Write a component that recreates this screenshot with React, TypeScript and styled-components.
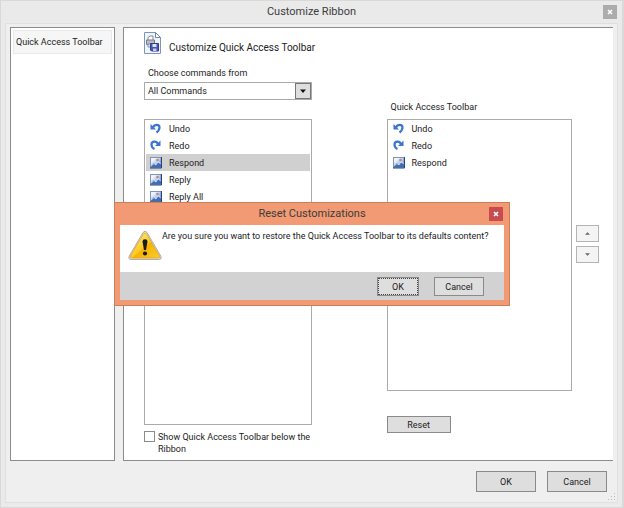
import React from 'react';
import styled, { createGlobalStyle, css } from 'styled-components';

const GlobalStyle = createGlobalStyle`
  *, *::before, *::after { box-sizing: border-box; }
  body {
    margin: 0;
    background: #fff;
    color: #222;
    font-family: Roboto, "Open Sans", sans-serif;
    font-size: 9px;
    line-height: 12px;
  }
  button, select, input { font: inherit; color: inherit; margin: 0; }
  h1, h2, p, ul { margin: 0; padding: 0; font-size: inherit; font-weight: 400; }
`;

const Window = styled.main`
  display: flex;
  flex-direction: column;
  min-height: 100vh;
  padding: 0 4px 4px 4px;
  background: #eaeaea;
  border: solid #d9d9d9;
  border-width: 1px 2px 2px 1px;
`;

const TitleBar = styled.header`
  display: grid;
  grid-template-columns: 1fr auto 1fr;
  align-items: center;
  height: 22px;
`;

const Title = styled.h1`
  grid-column: 2;
  font-size: 11px;
  line-height: 16px;
  color: #3c3c3c;
`;

const CloseButton = styled.button<{ $active?: boolean }>`
  justify-self: end;
  display: grid;
  place-items: center;
  width: 14px;
  height: 14px;
  margin-right: 1px;
  padding: 0;
  border: 0;
  color: #fff;
  background: ${p => (p.$active ? '#c84b50' : '#acacac')};
`;

const Content = styled.div`
  flex: 1;
  display: flex;
  flex-direction: column;
  padding: 3px 4px 0;
  background: #efefef;
  border: 1px solid #e0e0e0;
`;

const Panels = styled.div`
  flex: 1;
  display: flex;
  gap: 8px;
`;

const Sidebar = styled.nav`
  flex: 0 0 105px;
  padding: 2px;
  background: #fff;
  border: 1px solid #8c8c8c;
`;

const SideItem = styled.a`
  display: block;
  padding: 5px 2px;
  background: #f6f6f6;
  border: 1px solid #e9e9e9;
  color: inherit;
  text-decoration: none;
  white-space: nowrap;
`;

const Page = styled.section`
  flex: 1;
  padding: 4px 14px 5px 20px;
  background: #fff;
  border: solid #8c8c8c;
  border-width: 1px 0 1px 1px;
`;

const PageHeader = styled.div`
  display: flex;
  align-items: center;
  gap: 8px;
  height: 22px;
`;

const PageTitle = styled.h2`
  padding-top: 10px;
  font-size: 10px;
  line-height: 14px;
`;

const Columns = styled.div`
  display: flex;
`;

const Column = styled.div<{ $grow: number; $gap?: number; $top: number }>`
  flex: ${p => p.$grow} 1 0;
  min-width: 0;
  margin-right: ${p => p.$gap || 0}px;
  padding-top: ${p => p.$top}px;
`;

const Label = styled.label`
  display: block;
  padding-left: 4px;
`;

const ListTitle = styled.h2`
  margin-bottom: 6px;
  padding-left: 4px;
`;

const SelectBox = styled.div`
  display: grid;
  grid-template-columns: 1fr 16px;
  height: 18px;
  margin: 3px 0 19px;
  border: 1px solid #aaa;
  & > svg {
    grid-area: 1 / 2;
    width: 16px;
    height: 16px;
    background: #dedede;
    border: 1px solid #777;
    pointer-events: none;
  }
`;

const Select = styled.select`
  grid-area: 1 / 1 / 2 / 3;
  appearance: none;
  width: 100%;
  padding: 0 20px 0 3px;
  border: 0;
  background: #fff;
`;

const List = styled.ul<{ $height: number }>`
  height: ${p => p.$height}px;
  padding: 0 1px;
  border: 1px solid #ababab;
  list-style: none;
`;

const Row = styled.li<{ $selected?: boolean }>`
  display: flex;
  align-items: center;
  gap: 7px;
  height: 17px;
  padding-left: 3px;
  background: ${p => (p.$selected ? '#d0d0d0' : 'transparent')};
`;

const CheckLabel = styled.label`
  display: flex;
  gap: 3px;
  padding-top: 6px;
`;

const Checkbox = styled.input`
  appearance: none;
  flex: 0 0 11px;
  height: 11px;
  border: 1px solid #8c8c8c;
  background: #fff;
`;

const Button = styled.button<{ $width: number; $height: number; $focus?: boolean }>`
  width: ${p => p.$width}px;
  height: ${p => p.$height}px;
  padding: 0;
  background: #dedede;
  border: 1px solid #8a8a8a;
  ${p => p.$focus && css`
    outline: 1px dotted #444;
    outline-offset: -2px;
  `}
`;

const ResetRow = styled.div`
  padding-top: 25px;
`;

const Movers = styled.div`
  display: flex;
  flex-direction: column;
  gap: 4px;
  padding: 171px 0 0 4px;
`;

const MoveButton = styled.button`
  display: grid;
  place-items: center;
  width: 23px;
  height: 17px;
  padding: 0;
  border: 1px solid #b4b4b4;
  background: #f4f4f4;
`;

const Footer = styled.footer`
  position: relative;
  display: flex;
  justify-content: flex-end;
  gap: 11px;
  padding: 10px 6px;
`;

const Grip = styled.svg`
  position: absolute;
  right: -3px;
  bottom: 1px;
`;

const Overlay = styled.div`
  position: fixed;
  inset: 0;
  display: grid;
  place-items: center;
`;

const Dialog = styled.section`
  width: 396px;
  max-width: 100%;
  padding: 0 5px 5px;
  background: #f19a74;
  border: 1px solid #cf7c58;
`;

const DialogBody = styled.div`
  display: flex;
  min-height: 47px;
  padding: 5px 8px;
  background: #fff;
  & > svg { flex: none; }
`;

const DialogText = styled.p`
  flex: 1;
`;

const DialogFooter = styled.div`
  display: flex;
  justify-content: flex-end;
  gap: 15px;
  padding: 5px 20px 4px;
  background: #d2d2d2;
`;

const CloseIcon = () => (
  <svg width="6" height="6" viewBox="0 0 6 6" aria-hidden="true">
    <path d="M1 1l4 4M5 1L1 5" stroke="currentColor" strokeWidth="1.5" />
  </svg>
);

const UndoIcon = () => (
  <svg width="13" height="13" viewBox="0 0 13 13" aria-hidden="true">
    <path d="M1.500 2v5.500h5.500z" fill="#3c74d0" />
    <path d="M4 5.500C5.500 2 10.500 2 10.500 5.500c0 2-1 3.500-3 5" fill="none" stroke="#3c74d0" strokeWidth="2.200" />
  </svg>
);

const RedoIcon = () => (
  <svg width="13" height="13" viewBox="0 0 13 13" aria-hidden="true">
    <path d="M11.500 1.500v5.500H6z" fill="#3c74d0" />
    <path d="M9 5C7.500 1.500 2.500 2 2.500 5.500c0 2 1 3.500 3 4.500" fill="none" stroke="#3c74d0" strokeWidth="2.200" />
  </svg>
);

const PictureIcon = () => (
  <svg width="13" height="13" viewBox="0 0 13 13" aria-hidden="true">
    <defs>
      <linearGradient id="sky" x1="0" y1="0" x2="1" y2="1">
        <stop offset="0.25" stopColor="#eef4fc" />
        <stop offset="1" stopColor="#5f88c8" />
      </linearGradient>
    </defs>
    <rect x="1.500" y="1.500" width="10.500" height="10" fill="url(#sky)" stroke="#8295b5" />
    <path d="M2 11V9.500l2.500-2.500 2 1.500 2.500-2 3 2V11z" fill="#3f6db8" />
    <path d="M2 10l3-2.500L7 9l2-3.500 2.500 2" fill="none" stroke="#dfe9f8" strokeWidth=".9" />
    <circle cx="8.500" cy="4" r="1.300" fill="#b88a86" />
    <path d="M12.500 1v11H1" fill="none" stroke="#24427c" />
  </svg>
);

const PageIcon = () => (
  <svg width="17" height="22" viewBox="0 0 17 22" aria-hidden="true">
    <path d="M.5.5h11l5 5v16H.5z" fill="#f0f5fc" stroke="#8095bd" />
    <path d="M11.500.5v5h5z" fill="#fff" stroke="#6b84b5" />
    <path d="M4 8V5.500L6 4h3v4" fill="#fff" stroke="#888" />
    <path d="M2.500 8h8v4.500h-8z" fill="#b9bcc2" stroke="#777b85" />
    <path d="M4 12h4v3H4z" fill="#e8edf7" stroke="#7d8cab" />
    <path d="M6.500 11.500h8v7.500h-7l-1-1z" fill="#4656b5" stroke="#303b91" />
    <path d="M8.500 12h4v3h-4z" fill="#dfe5f8" />
    <path d="M9 16.500h3.500V19H9z" fill="#c6cdea" />
  </svg>
);

const WarningIcon = () => (
  <svg width="34" height="31" viewBox="0 0 34 31" aria-hidden="true">
    <defs>
      <linearGradient id="amber" x1="0" y1="0" x2="1" y2="1">
        <stop offset="0" stopColor="#fff0a0" />
        <stop offset="0.500" stopColor="#fccb24" />
        <stop offset="0.550" stopColor="#f5b300" />
        <stop offset="1" stopColor="#f7cf31" />
      </linearGradient>
    </defs>
    <path d="M15 2.500q2-3 4 0l14 24q1 3-2 3H3q-3 0-2-3z" fill="#e3dccd" stroke="#a39c91" strokeWidth=".8" />
    <path d="M15.500 4q1.500-2 3 0L31.500 26q.5 2-1.500 2H4Q2 28 2.500 26z" fill="url(#amber)" stroke="#dfa21a" strokeWidth=".7" />
    <path d="M14.500 11.500q0-2.200 2.500-2.200t2.500 2.200l-1.500 8.500h-2z" fill="#1d1b18" />
    <circle cx="17" cy="23.500" r="2.100" fill="#1d1b18" />
  </svg>
);

const Arrow = ({ up }: { up?: boolean }) => (
  <svg width="5" height="3" viewBox="0 0 6 3" aria-hidden="true">
    <path d={up ? 'M0 3l3-3 3 3z' : 'M0 0l3 3 3-3z'} fill="#666" />
  </svg>
);

const icons = { undo: UndoIcon, redo: RedoIcon, picture: PictureIcon };

type Command = { name: string; icon: keyof typeof icons };

const commands: Command[] = [
  { name: 'Undo', icon: 'undo' },
  { name: 'Redo', icon: 'redo' },
  { name: 'Respond', icon: 'picture' },
  { name: 'Reply', icon: 'picture' },
  { name: 'Reply All', icon: 'picture' },
];

const CommandList = ({ items, selected, height }: { items: Command[]; selected?: string; height: number }) => (
  <List $height={height}>
    {items.map(({ name, icon }) => {
      const Icon = icons[icon];
      return (
        <Row key={name} $selected={name === selected}>
          <Icon />
          {name}
        </Row>
      );
    })}
  </List>
);

export default function App() {
  return (
    <>
      <GlobalStyle />
      <Window>
        <TitleBar>
          <Title>Customize Ribbon</Title>
          <CloseButton aria-label="Close"><CloseIcon /></CloseButton>
        </TitleBar>
        <Content>
          <Panels>
            <Sidebar>
              <SideItem href="#toolbar">Quick Access Toolbar</SideItem>
            </Sidebar>
            <Page>
              <PageHeader>
                <PageIcon />
                <PageTitle>Customize Quick Access Toolbar</PageTitle>
              </PageHeader>
              <Columns>
                <Column $grow={168} $gap={75} $top={13}>
                  <Label htmlFor="source">Choose commands from</Label>
                  <SelectBox>
                    <Select id="source"><option>All Commands</option></Select>
                    <svg viewBox="0 0 14 14" aria-hidden="true"><path d="M4 5.500h6l-3 3.500z" fill="#111" /></svg>
                  </SelectBox>
                  <CommandList items={commands} selected="Respond" height={306} />
                  <CheckLabel>
                    <Checkbox type="checkbox" />
                    <span>Show Quick Access Toolbar below the Ribbon</span>
                  </CheckLabel>
                </Column>
                <Column $grow={186} $top={47}>
                  <ListTitle>Quick Access Toolbar</ListTitle>
                  <CommandList items={commands.slice(0, 3)} height={272} />
                  <ResetRow>
                    <Button $width={64} $height={17}>Reset</Button>
                  </ResetRow>
                </Column>
                <Movers>
                  <MoveButton aria-label="Move up"><Arrow up /></MoveButton>
                  <MoveButton aria-label="Move down"><Arrow /></MoveButton>
                </Movers>
              </Columns>
            </Page>
          </Panels>
          <Footer>
            <Button $width={60} $height={21}>OK</Button>
            <Button $width={60} $height={21}>Cancel</Button>
            <Grip width="9" height="9" viewBox="0 0 9 9" aria-hidden="true">
              <path d="M7 1h1v1H7zM4 4h1v1H4zM7 4h1v1H7zM1 7h1v1H1zM4 7h1v1H4zM7 7h1v1H7z" fill="#bcbcbc" />
            </Grip>
          </Footer>
        </Content>
      </Window>
      <Overlay>
        <Dialog role="dialog" aria-modal="true" aria-labelledby="reset-title">
          <TitleBar>
            <Title id="reset-title">Reset Customizations</Title>
            <CloseButton $active aria-label="Close dialog"><CloseIcon /></CloseButton>
          </TitleBar>
          <DialogBody>
            <WarningIcon />
            <DialogText>Are you sure you want to restore the Quick Access Toolbar to its defaults content?</DialogText>
          </DialogBody>
          <DialogFooter>
            <Button $width={42} $height={19} $focus>OK</Button>
            <Button $width={50} $height={19}>Cancel</Button>
          </DialogFooter>
        </Dialog>
      </Overlay>
    </>
  );
}
